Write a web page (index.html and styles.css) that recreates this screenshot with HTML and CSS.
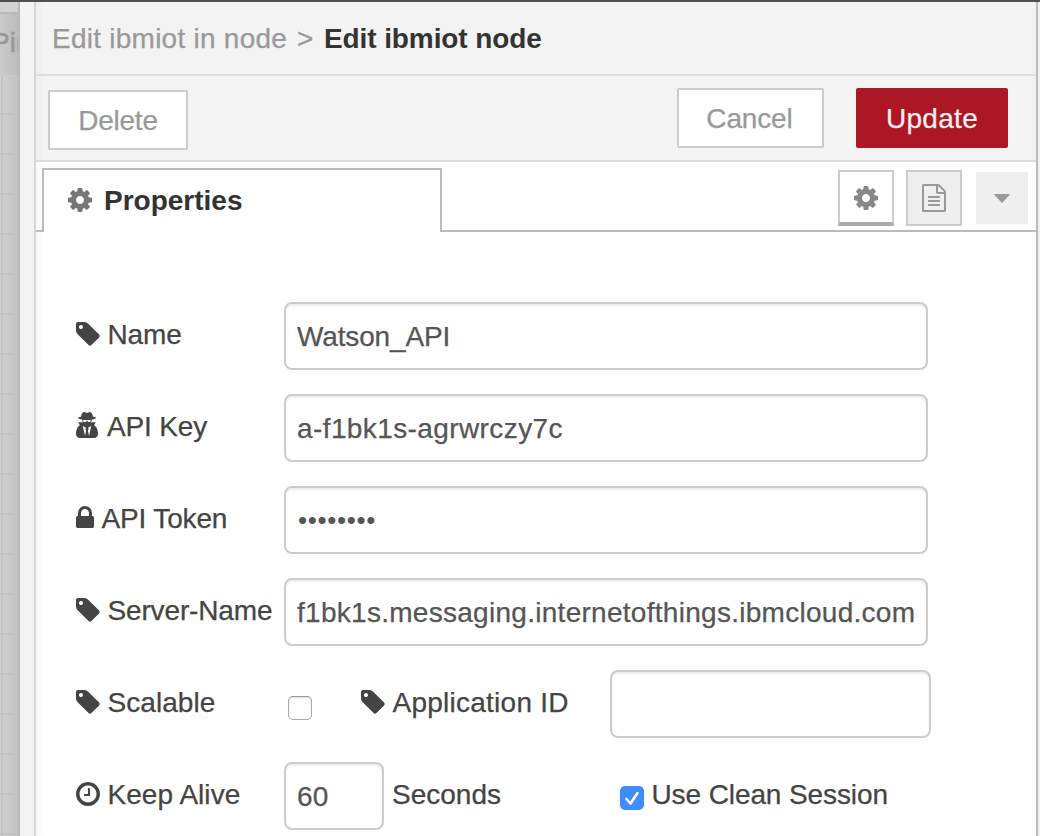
FILE: index.html
```html
<!DOCTYPE html>
<html lang="en">
<head>
<meta charset="utf-8">
<title>Edit ibmiot node</title>
<link rel="stylesheet" href="styles.css">
</head>
<body>
<svg class="defs" aria-hidden="true">
  <symbol id="cog" viewBox="128 128 1536 1536"><path d="M1152 896q0-106-75-181t-181-75-181 75-75 181 75 181 181 75 181-75 75-181zm512-109v222q0 12-8 23t-20 13l-185 28q-19 54-39 91 35 50 107 138 10 12 10 25t-9 23q-27 37-99 108t-94 71q-12 0-26-9l-138-108q-44 23-91 38-16 136-29 186-7 28-36 28h-222q-14 0-24.500-8.500t-11.500-21.500l-28-184q-49-16-90-37l-141 107q-10 9-25 9-14 0-25-11-126-114-165-168-7-10-7-23 0-12 8-23 15-21 51-66.500t54-70.500q-27-50-41-99l-183-27q-13-2-21-12.500t-8-23.500v-222q0-12 8-23t19-13l186-28q14-46 39-92-40-57-107-138-10-12-10-24 0-10 9-23 26-36 98.500-107.500t94.500-71.500q13 0 26 10l138 107q44-23 91-38 16-136 29-186 7-28 36-28h222q14 0 24.500 8.500t11.500 21.500l28 184q49 16 90 37l142-107q9-9 24-9 13 0 25 10 129 119 165 170 7 8 7 22 0 12-8 23-15 21-51 66.500t-54 70.500q26 50 41 98l183 28q13 2 21 12.500t8 23.500z"/></symbol>
  <symbol id="tag" viewBox="128 128 1536 1536"><path d="M576 448q0-53-37.500-90.500t-90.500-37.500-90.500 37.500-37.500 90.500 37.500 90.500 90.500 37.500 90.500-37.500 37.500-90.500zm1067 576q0 53-37 90l-491 492q-39 37-91 37-53 0-90-37l-715-716q-38-37-64.500-101t-26.500-117v-416q0-52 38-90t90-38h416q53 0 117 26.500t102 64.500l715 714q37 39 37 91z"/></symbol>
  <symbol id="lock" viewBox="320 128 1152 1408"><path d="M640 768h512v-192q0-106-75-181t-181-75-181 75-75 181v192zm832 96v576q0 40-28 68t-68 28h-960q-40 0-68-28t-28-68v-576q0-40 28-68t68-28h32v-192q0-184 132-316t316-132 316 132 132 316v192h32q40 0 68 28t28 68z"/></symbol>
  <symbol id="clock" viewBox="128 128 1536 1536"><path d="M1024 544v448q0 14-9 23t-23 9h-320q-14 0-23-9t-9-23v-64q0-14 9-23t23-9h224v-352q0-14 9-23t23-9h64q14 0 23 9t9 23zm416 352q0-148-73-273t-198-198-273-73-273 73-198 198-73 273 73 273 198 198 273 73 273-73 198-198 73-273zm224 0q0 209-103 385.500t-279.500 279.500-385.500 103-385.500-103-279.500-279.500-103-385.500 103-385.500 279.500-279.500 385.500-103 385.500 103 279.500 279.500 103 385.500z"/></symbol>
  <symbol id="doc" viewBox="128 0 1536 1792"><path d="M1596 380q28 28 48 76t20 88v1152q0 40-28 68t-68 28h-1344q-40 0-68-28t-28-68v-1600q0-40 28-68t68-28h896q40 0 88 20t76 48zm-444-244v376h376q-10-29-22-41l-313-313q-12-12-41-22zm384 1528v-1024h-416q-40 0-68-28t-28-68v-416h-768v1536h1280zm-1024-864q0-14 9-23t23-9h704q14 0 23 9t9 23v64q0 14-9 23t-23 9h-704q-14 0-23-9t-9-23v-64zm736 224q14 0 23 9t9 23v64q0 14-9 23t-23 9h-704q-14 0-23-9t-9-23v-64q0-14 9-23t23-9h704zm0 256q14 0 23 9t9 23v64q0 14-9 23t-23 9h-704q-14 0-23-9t-9-23v-64q0-14 9-23t23-9h704z"/></symbol>
  <symbol id="agent" viewBox="0 0 22 26"><path fill-rule="evenodd" d="M8 0C6.400 0 5.400 2.500 5 4.700C3 5.100 2 5.500 2 6c0 .6 1.800 1.200 4 1.500L7 10.200H2.200L3.900 13.200C1.400 14.600 0 17.500 0 21.800C0 24.500 1.600 26 4 26H18c2.400 0 4-1.500 4-4.200c0-4.300-1.400-7.200-3.900-8.600l1.700-3H15L16 7.500c2.200-.3 4-.9 4-1.500c0-.5-1-.9-3-1.300C16.600 2.500 15.600 0 14 0c-1 0-1.800.8-3 .8S9 0 8 0zM7 8h3.200l.8.500.8-.5H15l-.5 1.400c-.6 1-2.600.8-3.100-.5h-.8c-.5 1.300-2.500 1.500-3.100.5zM6.800 14l3.200 1.800-.7 1.500.8 1-1.100 5.700zM15.200 14l-3.200 1.800.7 1.500-.8 1 1.100 5.700z"/></symbol>
</svg>
<div class="app">
  <aside class="workspace">
    <div class="ws-tab">Pin</div>
    <div class="ws-grid"></div>
  </aside>
  <div class="handle"></div>
  <main class="tray">
    <header class="crumbs"><span class="crumb">Edit ibmiot in node</span><span class="sep">&gt;</span><strong class="current">Edit ibmiot node</strong></header>
    <div class="toolbar">
      <button class="btn delete">Delete</button>
      <div class="actions">
        <button class="btn cancel">Cancel</button>
        <button class="btn update">Update</button>
      </div>
    </div>
    <nav class="tabs">
      <div class="tab-lead"></div>
      <div class="tab"><svg class="i24"><use href="#cog"/></svg><span>Properties</span></div>
      <div class="tab-tools">
        <button class="tool on"><svg class="i24"><use href="#cog"/></svg></button>
        <button class="tool"><svg class="idoc"><use href="#doc"/></svg></button>
        <button class="tool caret"><svg class="icaret" viewBox="0 0 16 9"><path d="M1 0H15Q16.500 0 15.500 1L8.800 8.300Q8 9 7.200 8.300L.5 1Q-.5 0 1 0z"/></svg></button>
      </div>
    </nav>
    <form class="form">
      <div class="row"><label class="label"><svg class="i24"><use href="#tag"/></svg><span>Name</span></label><input class="field wide f-name" type="text" value="Watson_API"></div>
      <div class="row"><label class="label"><svg class="iagent"><use href="#agent"/></svg><span>API Key</span></label><input class="field wide f-key" type="text" value="a-f1bk1s-agrwrczy7c"></div>
      <div class="row"><label class="label"><svg class="ilock"><use href="#lock"/></svg><span>API Token</span></label><input class="field wide f-token" type="password" value="password"></div>
      <div class="row"><label class="label"><svg class="i24"><use href="#tag"/></svg><span>Server-Name</span></label><input class="field wide f-server" type="text" value="f1bk1s.messaging.internetofthings.ibmcloud.com"></div>
      <div class="row"><label class="label"><svg class="i24"><use href="#tag"/></svg><span class="t-scal">Scalable</span></label><span class="check off"></span><label class="label app-id"><svg class="i24"><use href="#tag"/></svg><span class="t-app">Application ID</span></label><input class="field app-field" type="text"></div>
      <div class="row"><label class="label"><svg class="i24"><use href="#clock"/></svg><span class="t-keep">Keep Alive</span></label><input class="field short" type="text" value="60"><span class="seconds">Seconds</span><span class="check yes"><svg class="tick" viewBox="0 0 24 24"><path d="M6.500 13L10.500 17.500L17.500 7"/></svg></span><span class="clean">Use Clean Session</span></div>
    </form>
  </main>
  <div class="edge"></div>
</div>
</body>
</html>
```
FILE: styles.css
```css
* { box-sizing: border-box; }
body {
  margin: 0;
  overflow: hidden;
  font: 28px/32px "Liberation Sans", Arial, sans-serif;
  color: #444;
  background: #fff;
  -webkit-text-stroke: .25px;
}
.defs { position: absolute; width: 0; height: 0; }
svg { display: block; flex: none; fill: currentColor; }
button, input { font: inherit; margin: 0; }
strong, .tab { -webkit-text-stroke: 0; }
.app {
  display: flex;
  width: 1040px;
  height: 836px;
  border-top: 2px solid #505050;
}

/* Shaded strip of the workspace behind the tray */
.workspace {
  flex: none;
  display: flex;
  flex-direction: column;
  width: 20px;
  overflow: hidden;
  border-right: 2px solid #b9b9b9;
  background: linear-gradient(90deg, #d2d2d2, #c2c2c2);
}
.ws-tab {
  height: 73px;
  padding: 25px 0 0;
  text-indent: -9px;
  color: #999;
  -webkit-text-stroke: .6px #999;
  background: linear-gradient(#d2d2d2 10px, #b9b9b9 10px, #b9b9b9 12px, transparent 12px), linear-gradient(90deg, #cbcbcb, #bdbdbd);
}
.ws-grid {
  flex: 1;
  background:
    linear-gradient(90deg, transparent 1px, #c3c3c3 1px, #c3c3c3 3px, transparent 3px),
    repeating-linear-gradient(transparent 0 38px, #c3c3c3 38px 40px);
}
.handle {
  flex: none;
  width: 16px;
  background: #f3f3f3;
  border-right: 2px solid #d6d6d6;
}
.tray {
  flex: none;
  width: 1000px;
  background: linear-gradient(90deg, #fafafa, #fff 8px);
}
.edge { flex: 1; border-left: 2px solid #bbb; background: #f1f1f1; }

.crumbs {
  display: flex;
  align-items: center;
  height: 74px;
  padding: 2px 0 0 16px;
  border-bottom: 2px solid #ddd;
  background: linear-gradient(90deg, #eee, #f3f3f3 8px);
  color: #999;
}
.crumb { width: 245px; white-space: nowrap; letter-spacing: .25px; }
.sep { width: 27px; }
.current { color: #333; letter-spacing: -.1px; }
.toolbar {
  display: flex;
  justify-content: space-between;
  height: 86px;
  padding: 12px 28px 0 12px;
  border-bottom: 2px solid #ddd;
  background: linear-gradient(90deg, #eee, #f3f3f3 8px);
}
.btn {
  height: 60px;
  padding: 2px 0 0;
  border: 2px solid #ccc;
  border-radius: 2px;
  background: #fff;
  color: #999;
}
.delete { width: 140px; margin-top: 2px; letter-spacing: -.25px; }
.actions { display: flex; gap: 32px; }
.cancel { width: 147px; letter-spacing: -.15px; padding-right: 2px; }
.update { width: 152px; background: #ad1625; border-color: #ad1625; color: #eee; letter-spacing: .3px; }

.tabs { display: flex; align-items: flex-end; height: 70px; }
.tab-lead { width: 6px; height: 2px; background: #bbb; }
.tab {
  display: flex;
  align-items: center;
  gap: 12px;
  width: 400px;
  height: 64px;
  padding: 0 0 2px 24px;
  border: 2px solid #bbb;
  border-bottom: 0;
  border-radius: 1px 1px 0 0;
  font-weight: bold;
  color: #333;
}
.tab span { padding-top: 1px; }
.tab svg { color: #777; }
.tab-tools {
  flex: 1;
  display: flex;
  justify-content: flex-end;
  height: 70px;
  padding: 8px 8px 0 0;
  border-bottom: 2px solid #bbb;
}
.tool {
  display: flex;
  align-items: center;
  justify-content: center;
  width: 56px;
  height: 56px;
  margin-left: 12px;
  padding: 0 1px 0 0;
  border: 2px solid #ccc;
  background: #efefef;
  color: #999;
}
.tool.on { background: #fff; border-bottom: 4px solid #aaa; color: #888; padding-top: 2px; }
.tool.caret { width: 52px; height: 52px; margin: 2px 0 0 14px; border: 0; }
.i24 { width: 24px; height: 24px; }
.idoc { width: 24px; height: 28px; }
.iagent { width: 22px; height: 26px; }
.ilock { width: 18px; height: 22px; }
.icaret { width: 16px; height: 9px; }

.form { display: flex; flex-direction: column; gap: 24px; padding: 70px 0 0 40px; }
.row { display: flex; height: 68px; }
.label {
  display: flex;
  align-items: center;
  width: 208px;
  height: 64px;
  white-space: nowrap;
  letter-spacing: -.15px;
}
.label span { padding-top: 2px; }
.label svg { margin-right: 7.500px; }
.label .iagent { margin: 0 9px 2px 0; }
.label .ilock { margin: 0 7.500px 2px 0; }
.label .t-scal, .label .t-keep { letter-spacing: .05px; }
.label .t-app { letter-spacing: .25px; }
.field {
  flex: none;
  height: 68px;
  padding: 2px 11px 0;
  border: 2px solid #ccc;
  border-radius: 8px;
  background: #fff;
  box-shadow: inset 0 2px 2px rgba(0, 0, 0, .075);
  color: #555;
  outline: 0;
}
.wide { width: 644px; }
.f-name { letter-spacing: -.15px; }
.f-key { letter-spacing: .4px; }
.f-token { padding: 0 12px; font-size: 26px; letter-spacing: .65px; -webkit-text-stroke: 0; }
.f-server { letter-spacing: .28px; }
.short { width: 100px; letter-spacing: .2px; }
.app-id { width: 249px; margin-left: 49px; }
.app-field { width: 321px; }
.check { flex: none; width: 24px; height: 24px; border-radius: 5px; }
.off { margin: 26px 0 0 4px; border: 1px solid #aaa; border-top-color: #999; box-shadow: inset 0 1px 2px rgba(0, 0, 0, .12); }
.yes { margin-top: 24px; background: #3f8cfc; }
.tick { width: 24px; height: 24px; fill: none; stroke: #fff; stroke-width: 2.600; stroke-linecap: round; stroke-linejoin: round; }
.seconds { width: 228px; margin-left: 8px; padding-top: 17px; }
.clean { margin-left: 7.500px; padding-top: 17px; white-space: nowrap; letter-spacing: -.1px; }
```
